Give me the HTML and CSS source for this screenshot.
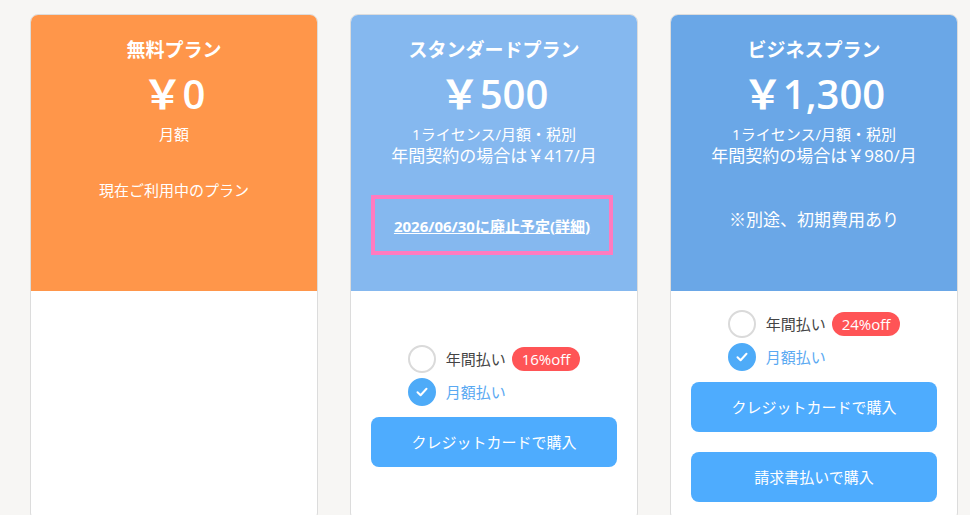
FILE: index.html
```html
<!DOCTYPE html>
<html lang="ja">
<head>
    <meta charset="UTF-8">
    <meta name="viewport" content="width=device-width, initial-scale=1.0">
    <title>プラン選択</title>
    <link rel="stylesheet" href="styles.css">
</head>
<body>
    <div class="plans">
        <div class="plan">
            <div class="plan-head free">
                <div class="plan-name">無料プラン</div>
                <div class="plan-price">￥0</div>
                <div class="plan-note">月額</div>
                <div class="plan-current">現在ご利用中のプラン</div>
            </div>
            <div class="plan-body"></div>
        </div>

        <div class="plan">
            <div class="plan-head standard">
                <div class="plan-name">スタンダードプラン</div>
                <div class="plan-price">￥500</div>
                <div class="plan-note">1ライセンス/月額・税別</div>
                <div class="plan-annual">年間契約の場合は￥417/月</div>
                <div class="notice"><a href="#">2026/06/30に廃止予定(詳細)</a></div>
            </div>
            <div class="plan-body">
                <div class="pay-options">
                    <div class="pay-row"><span class="radio"></span><span class="pay-label">年間払い</span><span class="badge">16%off</span></div>
                    <div class="pay-row checked"><span class="radio"><svg viewBox="0 0 14 14" width="14" height="14"><path d="M2.5 7.2 L5.6 10.2 L11.5 3.8" fill="none" stroke="#fff" stroke-width="2" stroke-linecap="round" stroke-linejoin="round"/></svg></span><span class="pay-label">月額払い</span></div>
                </div>
                <button class="buy">クレジットカードで購入</button>
            </div>
        </div>

        <div class="plan">
            <div class="plan-head business">
                <div class="plan-name">ビジネスプラン</div>
                <div class="plan-price">￥1,300</div>
                <div class="plan-note">1ライセンス/月額・税別</div>
                <div class="plan-annual">年間契約の場合は￥980/月</div>
                <div class="plan-extra">※別途、初期費用あり</div>
            </div>
            <div class="plan-body">
                <div class="pay-options">
                    <div class="pay-row"><span class="radio"></span><span class="pay-label">年間払い</span><span class="badge">24%off</span></div>
                    <div class="pay-row checked"><span class="radio"><svg viewBox="0 0 14 14" width="14" height="14"><path d="M2.5 7.2 L5.6 10.2 L11.5 3.8" fill="none" stroke="#fff" stroke-width="2" stroke-linecap="round" stroke-linejoin="round"/></svg></span><span class="pay-label">月額払い</span></div>
                </div>
                <button class="buy">クレジットカードで購入</button>
                <button class="buy second">請求書払いで購入</button>
            </div>
        </div>
    </div>
</body>
</html>
```

FILE: styles.css
```css
* {
    box-sizing: border-box;
}
body {
    margin: 0;
    background-color: #f7f6f4;
    font-family: 'Open Sans', 'Noto Sans CJK JP', sans-serif;
    color: #444;
}
.plans {
    display: flex;
    gap: 32px;
    padding: 14px 0 0 30px;
}
.plan {
    width: 288px;
    border: 1px solid #dcdcdc;
    border-radius: 8px;
    background-color: #fff;
    overflow: hidden;
    flex-shrink: 0;
}
.plan-head {
    height: 276px;
    color: #fff;
    text-align: center;
    padding-top: 21px;
}
.free {
    background-color: #ff964a;
}
.standard {
    background-color: #85b8ef;
}
.business {
    background-color: #6aa7e7;
}
.plan-name {
    font-size: 19px;
    font-weight: bold;
    line-height: 28px;
}
.plan-price {
    font-size: 40px;
    font-weight: 600;
    line-height: 56px;
    margin-top: 2px;
}
.plan-note {
    font-size: 15px;
    line-height: 22px;
    margin-top: 1px;
}
.plan-annual {
    font-size: 17px;
    line-height: 22px;
}
.plan-current {
    font-size: 15px;
    line-height: 22px;
    margin-top: 34px;
}
.plan-extra {
    font-size: 17px;
    line-height: 24px;
    margin-top: 41px;
}
.notice {
    margin: 28px 24px 0 20px;
    border: 4px solid #ff7bbf;
    height: 60px;
    display: flex;
    align-items: center;
    justify-content: center;
}
.notice a {
    color: #fff;
    font-size: 15px;
    font-weight: bold;
}
.plan-body {
    height: 229px;
    display: flex;
    flex-direction: column;
    justify-content: center;
    align-items: center;
    padding: 0 20px;
}
.pay-options {
    display: flex;
    flex-direction: column;
    gap: 5px;
    margin-bottom: 11px;
}
.pay-row {
    display: flex;
    align-items: center;
    height: 28px;
}
.radio {
    width: 28px;
    height: 28px;
    border: 2px solid #dadada;
    border-radius: 50%;
    display: flex;
    align-items: center;
    justify-content: center;
    margin-right: 10px;
}
.checked .radio {
    border-color: #4eabf8;
    background-color: #4eabf8;
}
.pay-label {
    font-size: 15px;
}
.checked .pay-label {
    color: #5aa9f2;
}
.badge {
    margin-left: 6px;
    background-color: #ff5456;
    color: #fff;
    font-size: 15px;
    border-radius: 12px;
    height: 24px;
    line-height: 24px;
    padding: 0 10px;
}
.buy {
    width: 100%;
    height: 50px;
    border: none;
    border-radius: 8px;
    background-color: #4eacfe;
    color: #fff;
    font-family: inherit;
    font-size: 15px;
    flex-shrink: 0;
}
.second {
    margin-top: 20px;
}
```
